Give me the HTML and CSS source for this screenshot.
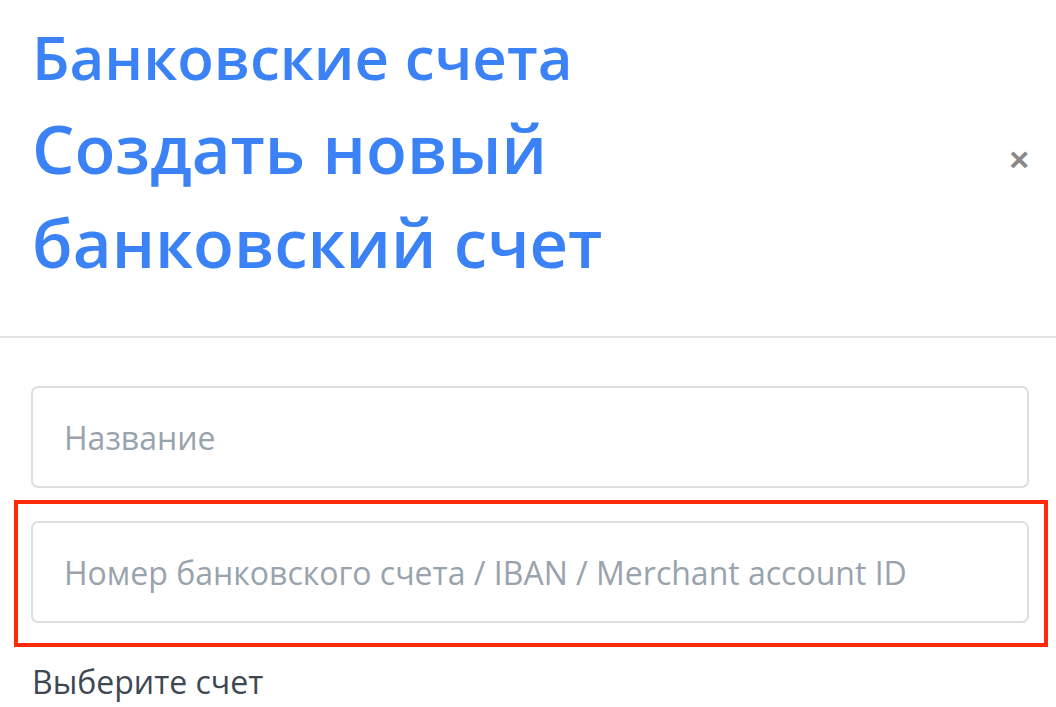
FILE: index.html
```html
<!DOCTYPE html>
<html lang="ru">
<head>
  <meta charset="UTF-8" />
  <meta name="viewport" content="width=device-width, initial-scale=1.0" />
  <title>Банковские счета</title>
  <link rel="stylesheet" href="styles.css">
</head>
<body>
  <div class="modal">
    <div class="modal-header">
      <div class="titles">
        <div class="section-title">Банковские счета</div>
        <h1 class="modal-title">Создать новый<br>банковский счет</h1>
      </div>
      <button class="close-btn" type="button">&times;</button>
    </div>
    <div class="modal-body">
      <input class="field" type="text" placeholder="Название">
      <div class="highlight">
        <input class="field" type="text" placeholder="Номер банковского счета / IBAN / Merchant account ID">
      </div>
      <div class="field-label">Выберите счет</div>
    </div>
  </div>
</body>
</html>
```

FILE: styles.css
```css
body {
  margin: 0;
  padding: 0;
  background: #fff;
  font-family: 'Open Sans', 'Noto Sans', sans-serif;
  overflow: hidden;
}
.modal {
  width: 1056px;
}
.modal-header {
  display: flex;
  align-items: center;
  justify-content: space-between;
  padding: 13px 27px 47px 32px;
  border-bottom: 2px solid #e2e2e2;
}
.section-title {
  font-size: 60px;
  line-height: 88px;
  font-weight: 600;
  color: #3b82f7;
}
.modal-title {
  margin: 0;
  font-size: 67px;
  line-height: 94px;
  font-weight: 600;
  color: #3b82f7;
}
.close-btn {
  background: none;
  border: none;
  padding: 0;
  margin-top: 16px;
  font-family: 'Liberation Sans', Arial, sans-serif;
  font-size: 34px;
  font-weight: bold;
  color: #888;
  line-height: 1;
  cursor: pointer;
}
.modal-body {
  padding: 48px 27px 0 14px;
  display: flex;
  flex-direction: column;
}
.field {
  box-sizing: border-box;
  height: 102px;
  width: 998px;
  margin-left: 17px;
  padding: 0 31px;
  border: 2px solid #dedede;
  border-radius: 7px;
  font-family: 'Open Sans', 'Noto Sans', sans-serif;
  font-size: 32px;
  color: #333;
  background: #fff;
  outline: none;
}
.field::placeholder {
  color: #98a3ad;
}
.highlight {
  margin-top: 12px;
  width: 1034px;
  box-sizing: border-box;
  border: 4px solid #ff2a0a;
  padding: 17px 0 20px 0;
}
.highlight .field {
  margin-left: 13px;
}
.field-label {
  margin: 11px 0 0 18px;
  font-size: 32px;
  line-height: 48px;
  color: #3e4852;
}
```
